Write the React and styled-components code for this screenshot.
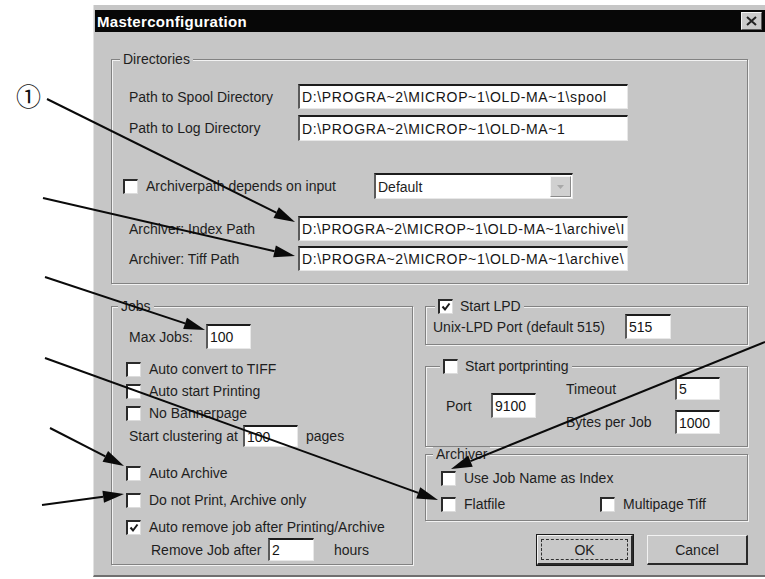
import styled, { createGlobalStyle } from "styled-components";

const GlobalStyle = createGlobalStyle`
  html, body {
    margin: 0;
    padding: 0;
    background: #fff;
  }
  body {
    font-family: "Liberation Sans", Arial, sans-serif;
  }
`;

const Page = styled.div`
  position: relative;
  width: 765px;
  height: 579px;
  box-sizing: border-box;
  padding-top: 5px;
  overflow: hidden;
`;

const Window = styled.div`
  margin-left: 93px;
  width: 672px;
  height: 572px;
  box-sizing: border-box;
  padding: 5px 0 0 1px;
  background: #c6c6c6;
  border-left: 1px solid #e2e2e2;
  border-bottom: 2px solid #707070;
  display: flex;
  flex-direction: column;
  color: #1e1e1e;
  font-size: 14px;
`;

const TitleBar = styled.div`
  height: 22px;
  background: #070707;
  display: flex;
  align-items: center;
  justify-content: space-between;
  padding: 0 3px 0 2px;
`;

const Title = styled.span`
  color: #fff;
  font-weight: bold;
  font-size: 15px;
  letter-spacing: 0.3px;
`;

const CloseButton = styled.div`
  width: 21px;
  height: 18px;
  box-sizing: border-box;
  background: #cacaca;
  border-top: 1px solid #f4f4f4;
  border-left: 1px solid #f4f4f4;
  border-right: 1px solid #5a5a5a;
  border-bottom: 1px solid #5a5a5a;
  display: flex;
  align-items: center;
  justify-content: center;
`;

const Body = styled.div`
  display: flex;
  flex-direction: column;
  padding: 0 17px 0 16px;
`;

const Group = styled.fieldset`
  margin: ${(p) => p.$margin || "0"};
  padding: 0;
  min-width: 0;
  border: 1px solid #828282;
  box-shadow: inset 1px 1px 0 #f2f2f2, 1px 1px 0 #f2f2f2;
`;

const Legend = styled.legend`
  margin-left: ${(p) => p.$indent}px;
  padding: 0 3px;
  height: 15px;
  line-height: 15px;
  background: #c6c6c6;
  display: flex;
  align-items: center;
  gap: 7px;
`;

const Inner = styled.div`
  display: flex;
  flex-direction: column;
  padding: ${(p) => p.$pad};
`;

const Row = styled.div`
  display: flex;
  align-items: center;
  height: ${(p) => p.$h}px;
  margin-top: ${(p) => p.$mt || 0}px;
  margin-left: ${(p) => p.$ml || 0}px;
`;

const Label = styled.span`
  width: ${(p) => (p.$w ? `${p.$w}px` : "auto")};
  margin-left: ${(p) => p.$ml || 0}px;
  margin-right: ${(p) => p.$mr || 0}px;
  flex-shrink: 0;
  white-space: nowrap;
`;

const Field = styled.div`
  width: ${(p) => p.$w}px;
  height: ${(p) => p.$h}px;
  box-sizing: border-box;
  flex-shrink: 0;
  background: #fff;
  border-top: 2px solid #1c1c1c;
  border-left: 2px solid #5a5a5a;
  border-right: 1px solid #e8e8e8;
  border-bottom: 1px solid #e8e8e8;
  padding-left: 2px;
  display: flex;
  align-items: center;
  white-space: nowrap;
  overflow: hidden;
  letter-spacing: ${(p) => p.$ls || 0}px;
  color: #151515;
`;

const Combo = styled.div`
  width: 199px;
  height: 26px;
  box-sizing: border-box;
  background: #fff;
  border-top: 2px solid #1c1c1c;
  border-left: 2px solid #5a5a5a;
  border-right: 1px solid #e8e8e8;
  border-bottom: 1px solid #e8e8e8;
  display: flex;
  align-items: stretch;
`;

const ComboText = styled.span`
  flex: 1;
  padding-left: 2px;
  display: flex;
  align-items: center;
`;

const ComboButton = styled.span`
  width: 21px;
  margin: 1px;
  box-sizing: border-box;
  background: #d0d0d0;
  border-top: 1px solid #f4f4f4;
  border-left: 1px solid #f4f4f4;
  border-right: 1px solid #8a8a8a;
  border-bottom: 1px solid #8a8a8a;
  display: flex;
  align-items: center;
  justify-content: center;
`;

const Box = styled.span`
  width: 15px;
  height: 15px;
  box-sizing: border-box;
  flex-shrink: 0;
  background: #fff;
  border-top: 2px solid #2a2a2a;
  border-left: 2px solid #2a2a2a;
  border-right: 1px solid #dcdcdc;
  border-bottom: 1px solid #dcdcdc;
  display: inline-flex;
  align-items: center;
  justify-content: center;
`;

const CheckItem = styled.span`
  display: flex;
  align-items: center;
  gap: 8px;
  width: ${(p) => (p.$w ? `${p.$w}px` : "auto")};
  flex-shrink: 0;
  white-space: nowrap;
`;

const Columns = styled.div`
  display: flex;
  margin-top: 15px;
`;

const RightColumn = styled.div`
  flex: 1;
  margin-left: 12px;
  display: flex;
  flex-direction: column;
`;

const PortGrid = styled.div`
  display: grid;
  grid-template-columns: 109px 45px;
  grid-template-rows: 23px 24px;
  row-gap: 10px;
  align-items: center;
  margin-left: 30px;
`;

const ButtonRow = styled.div`
  display: flex;
  justify-content: flex-end;
  gap: 14px;
  margin-top: 14px;
`;

const Button = styled.div`
  width: ${(p) => p.$w}px;
  height: 30px;
  box-sizing: border-box;
  background: #c8c8c8;
  border-top: 1px solid #f2f2f2;
  border-left: 1px solid #f2f2f2;
  border-right: 2px solid #2a2a2a;
  border-bottom: 2px solid #2a2a2a;
  outline: ${(p) => (p.$default ? "1px solid #1a1a1a" : "none")};
  display: flex;
  align-items: center;
  justify-content: center;
  padding: 3px;
`;

const FocusRing = styled.span`
  flex: 1;
  align-self: stretch;
  border: 1px dashed #303030;
  display: flex;
  align-items: center;
  justify-content: center;
`;

const Overlay = styled.svg`
  position: absolute;
  left: 0;
  top: 0;
  pointer-events: none;
`;

const Callout = styled.span`
  position: absolute;
  left: 16px;
  top: 78px;
  font-family: "Noto Sans CJK JP", "DejaVu Sans", sans-serif;
  font-size: 25px;
  line-height: 34px;
  color: #111;
`;

const arrows = [
  [47, 99, 295, 222],
  [43, 198, 295, 256],
  [45, 277, 205, 330],
  [45, 358, 438, 500],
  [50, 428, 124, 466],
  [42, 505, 124, 494],
  [765, 342, 451, 469],
];

function Arrow({ x1, y1, x2, y2 }) {
  const dx = x2 - x1;
  const dy = y2 - y1;
  const len = Math.hypot(dx, dy);
  const ux = dx / len;
  const uy = dy / len;
  const bx = x2 - ux * 21;
  const by = y2 - uy * 21;
  const w = 6;
  const head = `${x2},${y2} ${bx - uy * w},${by + ux * w} ${bx + uy * w},${by - ux * w}`;
  return (
    <g>
      <line x1={x1} y1={y1} x2={bx} y2={by} stroke="#0a0a0a" strokeWidth="2" />
      <polygon points={head} fill="#0a0a0a" />
    </g>
  );
}

function Check({ checked }) {
  return (
    <Box>
      {checked && (
        <svg width="10" height="10" viewBox="0 0 10 10">
          <path d="M1.5 4.5 L4 7.5 L8.5 1.5" fill="none" stroke="#1a1a1a" strokeWidth="2" />
        </svg>
      )}
    </Box>
  );
}

function CheckRow({ label, checked, mt }) {
  return (
    <Row $h={22} $mt={mt}>
      <CheckItem>
        <Check checked={checked} />
        {label}
      </CheckItem>
    </Row>
  );
}

export default function App() {
  return (
    <Page>
      <GlobalStyle />
      <Window>
        <TitleBar>
          <Title>Masterconfiguration</Title>
          <CloseButton>
            <svg width="11" height="10" viewBox="0 0 11 10">
              <path d="M1 1 L10 9 M10 1 L1 9" stroke="#222" strokeWidth="2" />
            </svg>
          </CloseButton>
        </TitleBar>
        <Body>
          <Group $margin="20px 0 0 0">
            <Legend $indent={8}>Directories</Legend>
            <Inner $pad="17px 0 12px 17px">
              <Row $h={25}>
                <Label $w={169}>Path to Spool Directory</Label>
                <Field $w={330} $h={25} $ls={0.65}>
                  D:\PROGRA~2\MICROP~1\OLD-MA~1\spool
                </Field>
              </Row>
              <Row $h={26} $mt={6}>
                <Label $w={169}>Path to Log Directory</Label>
                <Field $w={330} $h={26} $ls={0.65}>
                  D:\PROGRA~2\MICROP~1\OLD-MA~1
                </Field>
              </Row>
              <Row $h={26} $mt={32} $ml={-6}>
                <CheckItem $w={251}>
                  <Check />
                  Archiverpath depends on input
                </CheckItem>
                <Combo>
                  <ComboText>Default</ComboText>
                  <ComboButton>
                    <svg width="9" height="6" viewBox="0 0 9 6">
                      <path d="M1 1 L4.5 5 L8 1 Z" fill="#a8a8a8" />
                    </svg>
                  </ComboButton>
                </Combo>
              </Row>
              <Row $h={25} $mt={17}>
                <Label $w={169}>Archiver: Index Path</Label>
                <Field $w={330} $h={25} $ls={0.55}>
                  D:\PROGRA~2\MICROP~1\OLD-MA~1\archive\I
                </Field>
              </Row>
              <Row $h={25} $mt={5}>
                <Label $w={169}>Archiver: Tiff Path</Label>
                <Field $w={330} $h={25} $ls={0.65}>
                  D:\PROGRA~2\MICROP~1\OLD-MA~1\archive\
                </Field>
              </Row>
            </Inner>
          </Group>

          <Columns>
            <Group style={{ width: 300 }}>
              <Legend $indent={6}>Jobs</Legend>
              <Inner $pad="10px 0 1px 14px">
                <Row $h={25}>
                  <Label $w={77} $ml={3}>Max Jobs:</Label>
                  <Field $w={45} $h={25}>100</Field>
                </Row>
                <CheckRow mt={9} label="Auto convert to TIFF" />
                <CheckRow label="Auto start Printing" />
                <CheckRow label="No Bannerpage" />
                <Row $h={24}>
                  <Label $w={114} $ml={3}>Start clustering at</Label>
                  <Field $w={55} $h={22}>100</Field>
                  <Label $ml={8}>pages</Label>
                </Row>
                <CheckRow mt={14} label="Auto Archive" />
                <CheckRow mt={5} label="Do not Print, Archive only" />
                <CheckRow mt={5} checked label="Auto remove job after Printing/Archive" />
                <Row $h={23}>
                  <Label $w={117} $ml={25}>Remove Job after</Label>
                  <Field $w={46} $h={23}>2</Field>
                  <Label $ml={20}>hours</Label>
                </Row>
              </Inner>
            </Group>

            <RightColumn>
              <Group>
                <Legend $indent={9}>
                  <Check checked />
                  Start LPD
                </Legend>
                <Inner $pad="0 0 5px 7px">
                  <Row $h={25}>
                    <Label $w={192}>Unix-LPD Port (default 515)</Label>
                    <Field $w={46} $h={25}>515</Field>
                  </Row>
                </Inner>
              </Group>

              <Group $margin="14px 0 0 0">
                <Legend $indent={14}>
                  <Check />
                  Start portprinting
                </Legend>
                <Inner $pad="3px 0 12px 20px">
                  <Row $h={57}>
                    <Label $w={45}>Port</Label>
                    <Field $w={45} $h={25}>9100</Field>
                    <PortGrid>
                      <Label>Timeout</Label>
                      <Field $w={45} $h={23}>5</Field>
                      <Label>Bytes per Job</Label>
                      <Field $w={45} $h={24}>1000</Field>
                    </PortGrid>
                  </Row>
                </Inner>
              </Group>

              <Group>
                <Legend $indent={7}>Archiver</Legend>
                <Inner $pad="5px 0 5px 15px">
                  <Row $h={22}>
                    <CheckItem>
                      <Check />
                      Use Job Name as Index
                    </CheckItem>
                  </Row>
                  <Row $h={22} $mt={4}>
                    <CheckItem $w={159}>
                      <Check />
                      Flatfile
                    </CheckItem>
                    <CheckItem>
                      <Check />
                      Multipage Tiff
                    </CheckItem>
                  </Row>
                </Inner>
              </Group>

              <ButtonRow>
                <Button $w={96} $default>
                  <FocusRing>OK</FocusRing>
                </Button>
                <Button $w={101}>Cancel</Button>
              </ButtonRow>
            </RightColumn>
          </Columns>
        </Body>
      </Window>

      <Callout>①</Callout>
      <Overlay width="765" height="579" viewBox="0 0 765 579">
        {arrows.map(([x1, y1, x2, y2], i) => (
          <Arrow key={i} x1={x1} y1={y1} x2={x2} y2={y2} />
        ))}
      </Overlay>
    </Page>
  );
}
